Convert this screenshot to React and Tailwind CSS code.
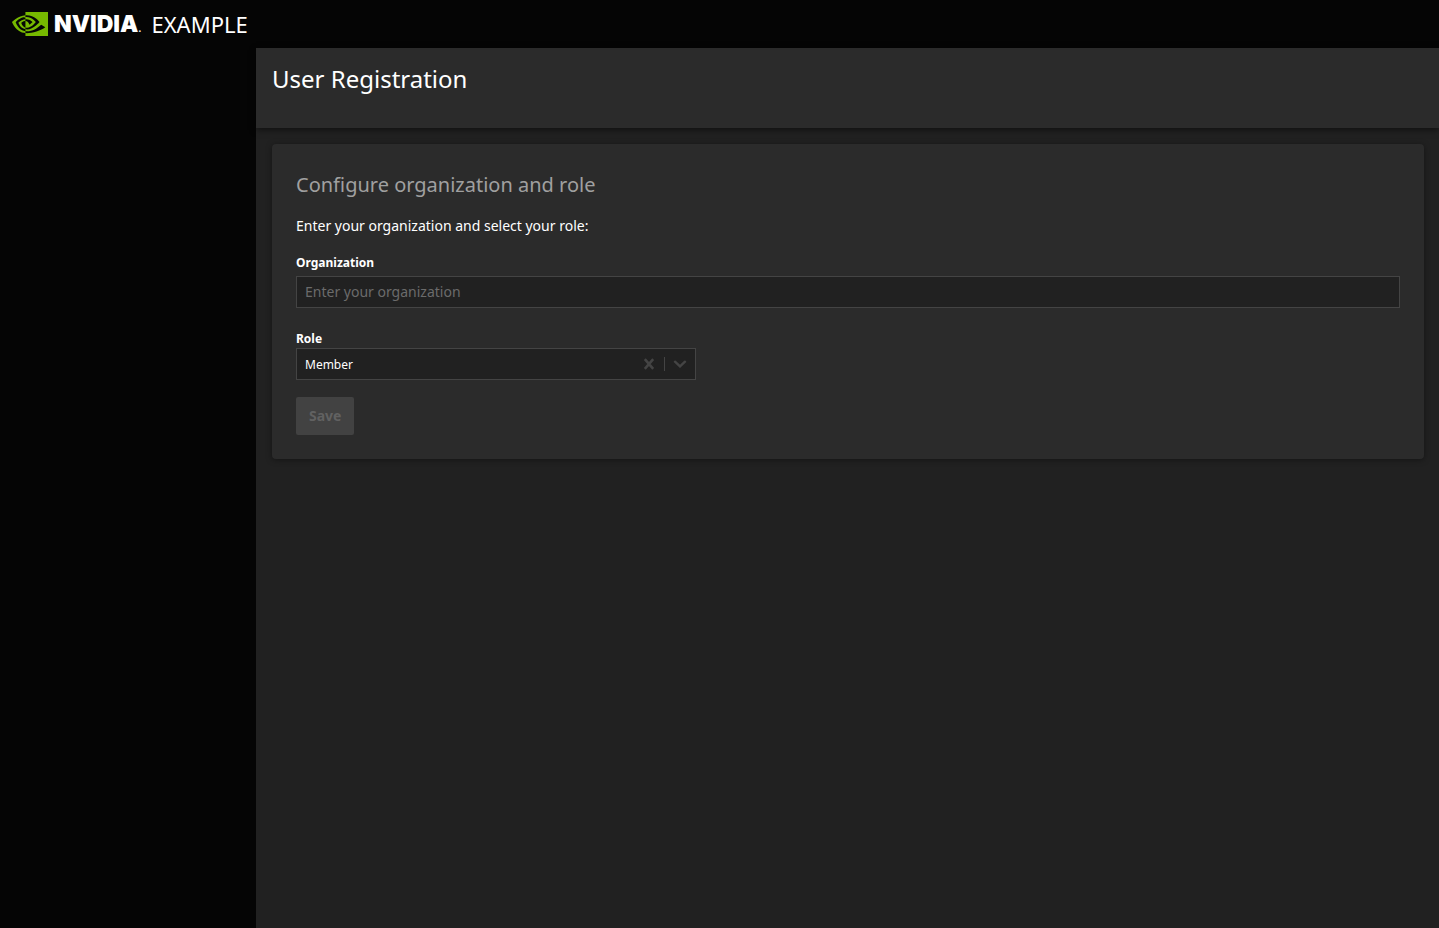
import { useState } from "react";
import { SiNvidia } from "react-icons/si";

const Header = () => (
  <header className="flex h-12 items-center bg-[#050505] px-3 text-white">
    <a href="#" className="flex items-center" aria-label="NVIDIA Example">
      <SiNvidia className="size-9 text-[#76b900]" />
      <span className="ml-1.5 font-['Inter',sans-serif] text-[23px] leading-8 font-black">
        NVIDIA
      </span>
      <span className="mt-2 text-xs leading-4">.</span>
      <span className="ml-2.5 text-[22px] leading-8">EXAMPLE</span>
    </a>
  </header>
);

const RoleSelect = ({ value, onChange }) => (
  <div className="flex h-8 w-full max-w-[400px] items-center border border-[#444444] bg-[#212121]">
    <select
      id="role"
      value={value}
      onChange={(e) => onChange(e.target.value)}
      className="h-full min-w-0 flex-1 appearance-none bg-[#212121] px-2 pt-px text-xs text-white outline-none"
    >
      <option value="" />
      <option value="member">Member</option>
      <option value="admin">Admin</option>
    </select>
    <button
      type="button"
      aria-label="Clear role"
      onClick={() => onChange("")}
      className="flex h-full w-[30px] items-center justify-center text-[#444444]"
    >
      <svg viewBox="0 0 12 12" className="size-3" fill="none" stroke="currentColor" strokeWidth="2.6">
        <path d="M1.8 1.2 L10.2 10.8 M10.2 1.2 L1.8 10.8" />
      </svg>
    </button>
    <span className="h-3.5 w-px bg-[#444444]" />
    <svg
      viewBox="0 0 14 8"
      className="mx-2 h-2 w-3.5 text-[#444444]"
      fill="none"
      stroke="currentColor"
      strokeWidth="2.4"
      strokeLinecap="round"
    >
      <path d="M2 1.7 L7 6.4 L12 1.7" />
    </svg>
  </div>
);

const RegistrationForm = () => {
  const [organization, setOrganization] = useState("");
  const [role, setRole] = useState("member");

  return (
    <form
      onSubmit={(e) => e.preventDefault()}
      className="rounded bg-[#2b2b2b] p-6 shadow-[0_1px_6px_rgba(0,0,0,0.4)]"
    >
      <h2 className="text-xl leading-[34px] text-[#a0a0a0]">
        Configure organization and role
      </h2>
      <p className="mt-3.5 text-sm leading-5">
        Enter your organization and select your role:
      </p>

      <label htmlFor="organization" className="mt-[18px] block text-xs leading-[18px] font-bold">
        Organization
      </label>
      <input
        id="organization"
        type="text"
        placeholder="Enter your organization"
        value={organization}
        onChange={(e) => setOrganization(e.target.value)}
        className="mt-1 block h-8 w-full border border-[#444444] bg-[#212121] px-2 pb-0.5 text-sm text-white outline-none placeholder:text-[#6b6b6b]"
      />

      <label htmlFor="role" className="mt-[22px] block text-xs leading-[18px] font-bold">
        Role
      </label>
      <RoleSelect value={role} onChange={setRole} />

      <button
        type="submit"
        disabled={!organization}
        className="mt-[17px] block h-[38px] rounded-xs bg-[#76b900] px-[13px] text-sm font-bold text-black disabled:bg-[#424242] disabled:text-[#616161]"
      >
        Save
      </button>
    </form>
  );
};

const App = () => {
  return (
    <div className="flex min-h-screen flex-col bg-[#212121] font-['Noto_Sans',sans-serif] text-white">
      <Header />
      <div className="flex flex-1">
        <aside className="w-64 shrink-0 bg-[#050505]" />
        <main className="min-w-0 flex-1">
          <div className="h-20 bg-[#2b2b2b] p-4 shadow-[0_2px_6px_rgba(0,0,0,0.5)]">
            <h1 className="text-2xl leading-[30px]">User Registration</h1>
          </div>
          <div className="py-4 pr-[15px] pl-4">
            <RegistrationForm />
          </div>
        </main>
      </div>
    </div>
  );
};

export default App;
